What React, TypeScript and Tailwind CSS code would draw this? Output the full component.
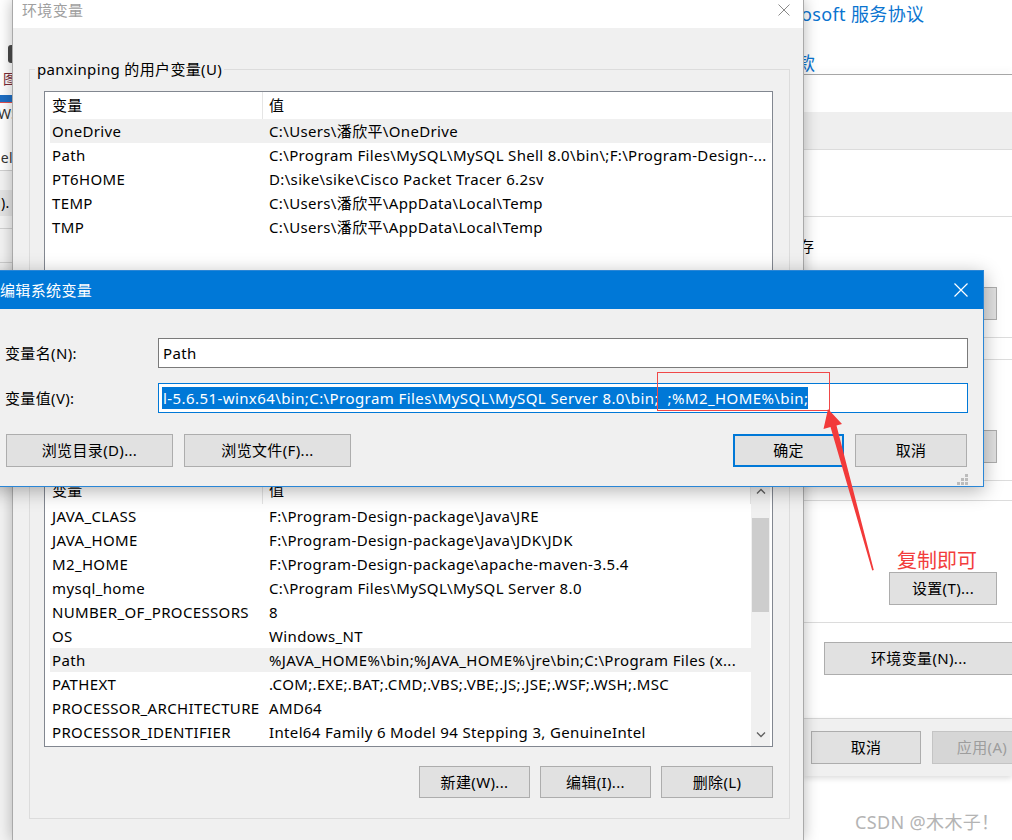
import React from 'react';

const FONT = "font-['Noto_Sans','Noto_Sans_CJK_SC',sans-serif]";

type BtnProps = { children?: React.ReactNode; className?: string; primary?: boolean; disabled?: boolean };

function Btn({ children, className = '', primary = false, disabled = false }: BtnProps) {
  const look = disabled
    ? 'bg-[#d6d6d6] border border-[#c4c4c4] text-[#9d9d9d]'
    : primary
    ? 'bg-[#e1e1e1] border-2 border-[#0078d7] text-black'
    : 'bg-[#e1e1e1] border border-[#adadad] text-black';
  return (
    <div className={`flex shrink-0 items-center justify-center whitespace-nowrap text-[15px] ${look} ${className}`}>
      {children}
    </div>
  );
}

function Chevron({ up }: { up?: boolean }) {
  return (
    <svg width="10" height="6" viewBox="0 0 10 6">
      <polyline
        points={up ? '1,5.5 5,1.5 9,5.5' : '1,0.5 5,4.5 9,0.5'}
        fill="none"
        stroke="#606060"
        strokeWidth="1.3"
      />
    </svg>
  );
}

type Row = [string, string];

const userRows: Row[] = [
  ['OneDrive', 'C:\\Users\\潘欣平\\OneDrive'],
  ['Path', 'C:\\Program Files\\MySQL\\MySQL Shell 8.0\\bin\\;F:\\Program-Design-...'],
  ['PT6HOME', 'D:\\sike\\sike\\Cisco Packet Tracer 6.2sv'],
  ['TEMP', 'C:\\Users\\潘欣平\\AppData\\Local\\Temp'],
  ['TMP', 'C:\\Users\\潘欣平\\AppData\\Local\\Temp'],
];

const sysRows: Row[] = [
  ['JAVA_CLASS', 'F:\\Program-Design-package\\Java\\JRE'],
  ['JAVA_HOME', 'F:\\Program-Design-package\\Java\\JDK\\JDK'],
  ['M2_HOME', 'F:\\Program-Design-package\\apache-maven-3.5.4'],
  ['mysql_home', 'C:\\Program Files\\MySQL\\MySQL Server 8.0'],
  ['NUMBER_OF_PROCESSORS', '8'],
  ['OS', 'Windows_NT'],
  ['Path', '%JAVA_HOME%\\bin;%JAVA_HOME%\\jre\\bin;C:\\Program Files (x...'],
  ['PATHEXT', '.COM;.EXE;.BAT;.CMD;.VBS;.VBE;.JS;.JSE;.WSF;.WSH;.MSC'],
  ['PROCESSOR_ARCHITECTURE', 'AMD64'],
  ['PROCESSOR_IDENTIFIER', 'Intel64 Family 6 Model 94 Stepping 3, GenuineIntel'],
];

function ListRows({ rows, selected, wide }: { rows: Row[]; selected: number; wide?: boolean }) {
  return (
    <div className={`flex flex-col ${wide ? 'flex-1' : 'w-[701px]'}`}>
      <div className={`flex h-[27px] shrink-0 items-center ${wide ? '' : 'border-r border-[#e5e5e5]'}`}>
        <div className="w-[213px] border-r border-[#e5e5e5] pl-[2px] leading-[27px]">变量</div>
        <div className="pl-[6px]">值</div>
      </div>
      {rows.map((r, i) => (
        <div key={r[0]} className={`flex h-[24px] shrink-0 items-center ${i === selected ? 'bg-[#f0f0f0]' : ''}`}>
          <div className="w-[213px] shrink-0 whitespace-nowrap pl-[2px]">{r[0]}</div>
          <div className="overflow-hidden whitespace-nowrap pl-[6px]">{r[1]}</div>
        </div>
      ))}
    </div>
  );
}

function EnvWindow() {
  return (
    <div className="absolute left-[12px] top-0 z-10 flex h-[840px] w-[792px] flex-col border-x border-[#a9a9a9] bg-[#f0f0f0] text-[15px] text-black shadow-[0_0_14px_rgba(0,0,0,0.28)]">
      <div className="flex h-[28px] shrink-0 items-center justify-between bg-white pb-[8px] pl-[9px] pr-[13px]">
        <span className="leading-[18px] text-[#a0a0a0]">环境变量</span>
        <svg width="12" height="12" viewBox="0 0 12 12">
          <path d="M0.5 0.5 L11.5 11.5 M11.5 0.5 L0.5 11.5" stroke="#8a8a8a" strokeWidth="1" />
        </svg>
      </div>

      <div className="flex flex-col pl-[16px] pr-[13px]">
        <fieldset className="mt-[31px] h-[330px] border border-[#dcdcdc]">
          <legend className="ml-[5px] px-[2px] leading-[20px]">panxinping 的用户变量(U)</legend>
          <div className="ml-[14px] mt-[12px] flex h-[200px] w-[729px] border border-[#828790] bg-white pl-[5px] pr-px">
            <ListRows rows={userRows} selected={0} wide />
          </div>
        </fieldset>

        <fieldset className="mt-[55px] border border-[#dcdcdc]">
          <legend className="ml-[5px] px-[2px] leading-[20px]">系统变量(S)</legend>
          <div className="ml-[14px] mt-[12px] flex h-[271px] w-[729px] overflow-hidden border border-[#828790] bg-white pl-[5px] pr-[2px]">
            <ListRows rows={sysRows} selected={6} />
            <div className="flex w-[19px] flex-col bg-[#f0f0f0]">
              <div className="flex h-[24px] items-center justify-center pt-[4px]">
                <Chevron up />
              </div>
              <div className="mx-px mt-[17px] h-[94px] bg-[#cdcdcd]" />
              <div className="flex-1" />
              <div className="flex h-[22px] items-center justify-center">
                <Chevron />
              </div>
            </div>
          </div>
          <div className="mb-[20px] mr-[16px] mt-[19px] flex justify-end gap-[10px]">
            <Btn className="h-[32px] w-[111px]">新建(W)...</Btn>
            <Btn className="h-[32px] w-[111px]">编辑(I)...</Btn>
            <Btn className="h-[32px] w-[112px]">删除(L)</Btn>
          </div>
        </fieldset>
      </div>
    </div>
  );
}

function EditDialog() {
  return (
    <div className="absolute left-[-12px] top-[270px] z-20 flex h-[217px] w-[996px] flex-col border border-[#2a86d6] bg-[#f0f0f0] text-[15px] text-black shadow-[0_4px_18px_rgba(0,0,0,0.3)]">
      <div className="flex h-[38px] shrink-0 items-center justify-between bg-[#0078d7] pl-[11px] pr-[15px] text-white">
        <span>编辑系统变量</span>
        <svg width="14" height="14" viewBox="0 0 14 14">
          <path d="M0.5 0.5 L13.5 13.5 M13.5 0.5 L0.5 13.5" stroke="#ffffff" strokeWidth="1.2" />
        </svg>
      </div>
      <div className="flex flex-1 flex-col pl-[16px] pr-[15px]">
        <div className="mt-[29px] flex items-center">
          <div className="w-[153px] shrink-0">变量名(N):</div>
          <div className="flex h-[30px] flex-1 items-center border border-[#7a7a7a] bg-white pl-[4px]">Path</div>
        </div>
        <div className="mt-[15px] flex items-center">
          <div className="w-[153px] shrink-0">变量值(V):</div>
          <div className="flex h-[30px] flex-1 items-center overflow-hidden border border-[#0078d7] bg-white pl-[3px]">
            <span className="whitespace-pre bg-[#0078d7] pl-px leading-[22px] tracking-[0.42px] text-white">
              l-5.6.51-winx64\bin;C:\Program Files\MySQL\MySQL Server 8.0\bin;  ;%M2_HOME%\bin;
            </span>
          </div>
        </div>
        <div className="mt-[21px] flex items-center">
          <Btn className="ml-px h-[33px] w-[167px]">浏览目录(D)...</Btn>
          <Btn className="ml-[11px] h-[33px] w-[167px]">浏览文件(F)...</Btn>
          <div className="flex-1" />
          <Btn primary className="h-[33px] w-[111px]">确定</Btn>
          <Btn className="ml-[11px] mr-px h-[33px] w-[112px]">取消</Btn>
        </div>
        <div className="flex flex-1 items-end justify-end pb-[1px]">
          <svg width="11" height="11" viewBox="0 0 11 11">
            <rect x="8" y="0" width="3" height="3" fill="#bcbcbc" />
            <rect x="4" y="4" width="3" height="3" fill="#bcbcbc" />
            <rect x="8" y="4" width="3" height="3" fill="#bcbcbc" />
            <rect x="0" y="8" width="3" height="3" fill="#bcbcbc" />
            <rect x="4" y="8" width="3" height="3" fill="#bcbcbc" />
            <rect x="8" y="8" width="3" height="3" fill="#bcbcbc" />
          </svg>
        </div>
      </div>
    </div>
  );
}

function RightBackdrop() {
  return (
    <div className="absolute left-[803px] top-0 flex h-[840px] w-[209px] flex-col overflow-hidden bg-white text-[15px] text-black">
      {/* settings page behind */}
      <div className="flex h-[74px] shrink-0 flex-col text-[18px] text-[#0a74d0]">
        <div className="ml-[-40px] whitespace-nowrap leading-[28px]">Microsoft 服务协议</div>
        <div className="ml-[-6px] mt-[21px] whitespace-nowrap leading-[28px]">款</div>
      </div>
      <div className="h-px shrink-0 bg-[#a6a6a6] shadow-[0_-3px_6px_rgba(0,0,0,0.12)]" />
      <div className="h-[37px] shrink-0" />
      <div className="h-[37px] shrink-0 bg-[#efefef]" />
      <div className="h-px shrink-0 bg-[#dcdcdc]" />
      <div className="h-[66px] shrink-0" />
      <div className="h-px shrink-0 bg-[#dcdcdc]" />
      <div className="h-[45px] shrink-0">
        <div className="ml-[-4px] mt-[19px] leading-[20px]">存</div>
      </div>

      {/* system properties dialog */}
      <div className="flex shrink-0 flex-col border-b border-[#dcdcdc]">
        <div className="flex justify-end border-b border-[#dcdcdc] pb-[17px] pr-[15px] pt-[25px]">
          <Btn className="h-[33px] w-[108px]">设置(T)...</Btn>
        </div>
        <div className="mt-[21px] flex justify-end border-y border-[#dcdcdc] pb-[17px] pr-[15px] pt-[70px]">
          <Btn className="h-[33px] w-[108px]">设置(T)...</Btn>
        </div>
        <div className="mt-[19px] flex justify-end border-y border-[#dcdcdc] pb-[17px] pr-[15px] pt-[71px]">
          <Btn className="h-[33px] w-[108px]">设置(T)...</Btn>
        </div>
        <div className="mb-[43px] ml-[21px] mt-[19px] flex">
          <Btn className="h-[33px] w-[190px]">环境变量(N)...</Btn>
        </div>
      </div>
      <div className="flex h-[57px] shrink-0 gap-[11px] bg-[#f0f0f0] pl-[8px] pt-[12px] shadow-[0_2px_6px_rgba(0,0,0,0.15)]">
        <Btn className="h-[33px] w-[110px]">取消</Btn>
        <Btn disabled className="h-[33px] w-[100px]">应用(A)</Btn>
      </div>
      <div className="ml-[52px] mt-[34px] whitespace-nowrap text-[18px] leading-[24px] text-[#b4b4b4]">CSDN @木木子！</div>
    </div>
  );
}

function LeftStrip() {
  return (
    <div className="absolute left-0 top-0 flex h-[840px] w-[12px] flex-col overflow-hidden bg-[#f3f3f3] text-[14px] text-black">
      <div className="flex h-[170px] shrink-0 flex-col bg-white">
        <div className="ml-[8px] mt-[45px] h-[18px] w-[6px] rounded-l-[3px] bg-[#4a4a4a]" />
        <div className="ml-[3px] mt-[8px] leading-[16px] text-[#7a2a36]">图</div>
        <div className="mt-[8px] h-[7px] bg-[#1f6fc4]" />
        <div className="h-px bg-[#e05050]" />
        <div className="ml-[-2px] mt-[4px] whitespace-nowrap leading-[14px] text-[#333]">WS</div>
        <div className="ml-[-10px] mt-[30px] whitespace-nowrap leading-[14px] text-[#333]">Hele</div>
      </div>
      <div className="h-px shrink-0 bg-[#d0d0d0]" />
      <div className="mt-[19px] h-[26px] shrink-0 bg-[#e4e4e4] leading-[26px]">
        <span className="ml-[-3px] whitespace-nowrap">l).</span>
      </div>
      <div className="mt-[12px] h-px shrink-0 bg-[#d0d0d0]" />
      <div className="mt-[33px] h-px shrink-0 bg-[#d0d0d0]" />
    </div>
  );
}

export default function App() {
  return (
    <div className={`relative h-[840px] w-[1012px] overflow-hidden bg-white tracking-[0.35px] ${FONT}`}>
      <RightBackdrop />
      <LeftStrip />
      <EnvWindow />
      <EditDialog />

      {/* annotations */}
      <div className="absolute left-[657px] top-[372px] z-30 h-[39px] w-[173px] border border-[#f04848]" />
      <div className="absolute left-[897px] top-[548px] z-30 text-[20px] leading-[26px] tracking-normal text-[#f23d3d]">复制即可</div>
      <svg className="pointer-events-none absolute left-0 top-0 z-30" width="1012" height="840" viewBox="0 0 1012 840">
        <polygon
          points="828,409 842,424 836.5,425.5 873.8,570 872.2,570.4 830.5,427 823.5,429"
          fill="#f23a3a"
        />
      </svg>
    </div>
  );
}
